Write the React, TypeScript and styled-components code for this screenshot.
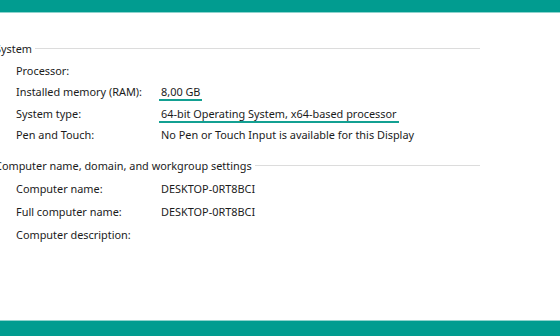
import React from "react";
import styled, { createGlobalStyle } from "styled-components";

const Global = createGlobalStyle`
  html, body { margin: 0; padding: 0; background: #ffffff; }
  body { width: 560px; height: 336px; overflow: hidden; }
  #root { height: 336px; }
`;

const Page = styled.div`
  width: 560px;
  height: 336px;
  display: flex;
  flex-direction: column;
  font-family: "Noto Sans", "Open Sans", sans-serif;
  font-size: 10.9px;
  color: #1b1b1b;
  background: #ffffff;
  overflow: hidden;
`;

const Bar = styled.div<{ $edge: "top" | "bottom" }>`
  height: ${(p) => (p.$edge === "top" ? "13px" : "16px")};
  flex: none;
  background: #019c90;
  ${(p) =>
    p.$edge === "top"
      ? "border-bottom: 1px solid #8ed3cd;"
      : "border-top: 1px solid #8ed3cd;"}
  box-sizing: border-box;
`;

const Content = styled.div`
  flex: 1;
  padding-top: 27px;
  margin-left: -5px;
  width: 485px;
`;

const Section = styled.section`
  display: flex;
  flex-direction: column;
  margin-bottom: 15px;
`;

const Heading = styled.div`
  display: flex;
  align-items: center;
  gap: 3px;
  height: 16px;
  margin-bottom: 7px;
  white-space: nowrap;
`;

const Rule = styled.div`
  flex: 1;
  height: 1px;
  background: #dcdcdc;
`;

const Rows = styled.div<{ $gap: number }>`
  display: grid;
  grid-template-columns: 145px 1fr;
  padding-left: 21px;
  row-gap: ${(p) => p.$gap}px;
`;

const Cell = styled.div`
  height: 16px;
  line-height: 16px;
  white-space: nowrap;
`;

const Marked = styled.span`
  display: inline-block;
  border-bottom: 2px solid #13a092;
  padding: 0 2px 0 2px;
  margin-left: -2px;
  line-height: 15px;
`;

type Row = { label: string; value?: string; marked?: boolean };

const system: Row[] = [
  { label: "Processor:" },
  { label: "Installed memory (RAM):", value: "8,00 GB", marked: true },
  { label: "System type:", value: "64-bit Operating System, x64-based processor", marked: true },
  { label: "Pen and Touch:", value: "No Pen or Touch Input is available for this Display" },
];

const naming: Row[] = [
  { label: "Computer name:", value: "DESKTOP-0RT8BCI" },
  { label: "Full computer name:", value: "DESKTOP-0RT8BCI" },
  { label: "Computer description:" },
];

function Block({ title, rows, gap }: { title: string; rows: Row[]; gap: number }) {
  return (
    <Section>
      <Heading>
        <span>{title}</span>
        <Rule />
      </Heading>
      <Rows $gap={gap}>
        {rows.map((r) => (
          <React.Fragment key={r.label}>
            <Cell>{r.label}</Cell>
            <Cell>{r.value ? r.marked ? <Marked>{r.value}</Marked> : r.value : null}</Cell>
          </React.Fragment>
        ))}
      </Rows>
    </Section>
  );
}

export default function App() {
  return (
    <>
      <Global />
      <Page>
        <Bar $edge="top" />
        <Content>
          <Block title="System" rows={system} gap={5.33} />
          <Block title="Computer name, domain, and workgroup settings" rows={naming} gap={7} />
        </Content>
        <Bar $edge="bottom" />
      </Page>
    </>
  );
}
